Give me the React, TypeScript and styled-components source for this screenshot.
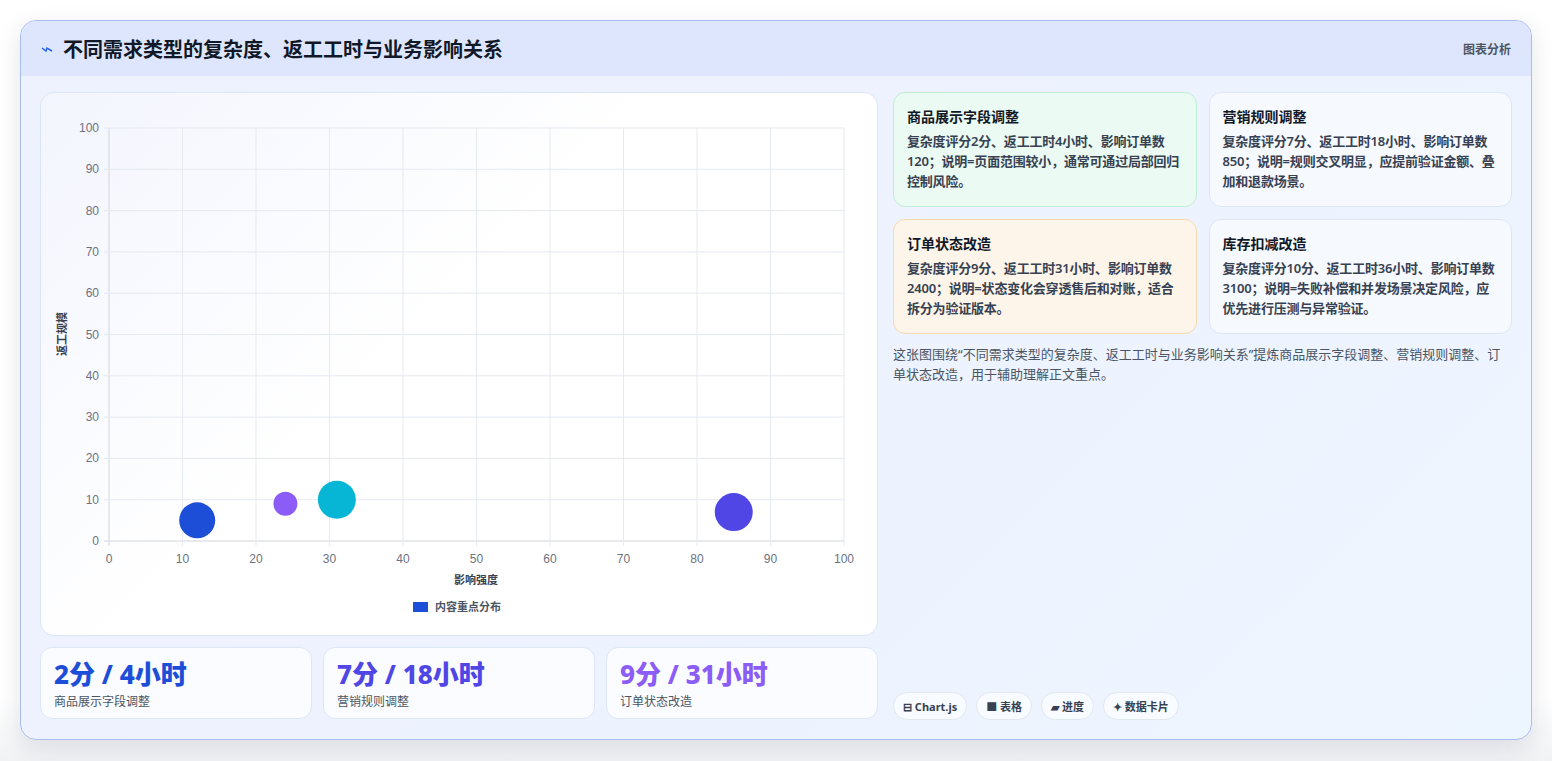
import React from "react";
import styled, { createGlobalStyle } from "styled-components";

const G = createGlobalStyle`
  body { margin:0; background:#f3f4f6; font-family: "Noto Sans", "Noto Sans CJK SC", sans-serif; }
`;
const Page = styled.div`padding:20px 20px 21px 20px; height:761px; box-sizing:border-box; background:linear-gradient(#fff 0,#fff 700px,#f1f2f4 100%);`;
const Card = styled.div`
  height:720px; box-sizing:border-box; border:1px solid #a9bdf0; border-radius:16px; overflow:hidden;
  background:linear-gradient(135deg,#eef1fe,#edf5ff); box-shadow:0 8px 24px rgba(30,40,80,.12);
  display:flex; flex-direction:column;
`;
const Header = styled.div`height:55px; background:#dde6fd; display:flex; align-items:center; justify-content:space-between; padding:0 20px 0 20px;`;
const Title = styled.h1`margin:0; font-size:20px; font-weight:700; color:#111827; display:flex; align-items:center; gap:10px;`;
const Tag = styled.span`font-size:12px; color:#4b5563; font-weight:600;`;
const Body = styled.div`flex:1; display:grid; grid-template-columns:838px 1fr; gap:15px; padding:16px 19px 19px 19px;`;
const Left = styled.div`display:flex; flex-direction:column; gap:11px;`;
const ChartBox = styled.div`height:544px; box-sizing:border-box; background:linear-gradient(135deg,#f3f5fe,#fff 45%); border:1px solid #dde5f3; border-radius:14px;`;
const Stats = styled.div`display:grid; grid-template-columns:repeat(3,1fr); gap:11px;`;
const Stat = styled.div`height:72px; box-sizing:border-box; background:#fafcff; border:1px solid #dde6f5; border-radius:12px; padding:10px 13px;`;
const Big = styled.div<{c:string}>`font-size:26px; font-weight:800; color:${p=>p.c}; line-height:32px;`;
const Small = styled.div`font-size:12px; color:#4b5563; margin-top:2px;`;
const Right = styled.div`display:flex; flex-direction:column;`;
const Grid = styled.div`display:grid; grid-template-columns:1fr 1fr; gap:12px;`;
const Info = styled.div<{bg:string; bd:string}>`height:115px; box-sizing:border-box; background:${p=>p.bg}; border:1px solid ${p=>p.bd}; border-radius:12px; padding:13px 13px;`;
const IT = styled.div`font-size:14px; font-weight:700; color:#111827; margin-bottom:5px;`;
const ID = styled.div`font-size:13px; line-height:20px; color:#374151; font-weight:600; letter-spacing:-0.2px;`;
const Note = styled.p`margin:10px 0 0; font-size:13px; line-height:20px; color:#4b5563;`;
const Chips = styled.div`margin-top:auto; display:flex; gap:9px;`;
const Chip = styled.span`height:28px; box-sizing:border-box; padding:0 9px; border:1px solid #e2e8f0; background:#f8fbff; border-radius:14px; font-size:11px; font-weight:700; color:#374151; display:flex; align-items:center; gap:3px;`;

const X0=68, X1=803, Y0=448, Y1=35;
const sx=(v:number)=>X0+(X1-X0)*v/100, sy=(v:number)=>Y0-(Y0-Y1)*v/100;
const ticks=[0,10,20,30,40,50,60,70,80,90,100];
const Chart=()=>(
  <svg width="838" height="544" style={{display:"block"}}>
    {ticks.map(t=>(<g key={t}>
      <line x1={sx(t)} x2={sx(t)} y1={Y1} y2={Y0+5} stroke={t===0?"#d1d5db":"#e5e9f0"}/>
      <line x1={X0-5} x2={X1} y1={sy(t)} y2={sy(t)} stroke={t===0?"#d1d5db":"#e5e9f0"}/>
      <text x={sx(t)} y={Y0+22} fontSize="12" fill="#6b7280" textAnchor="middle" fontFamily="Liberation Sans">{t}</text>
      <text x={X0-10} y={sy(t)+4} fontSize="12" fill="#6b7280" textAnchor="end" fontFamily="Liberation Sans">{t}</text>
    </g>))}
    <text x={435} y={491} fontSize="11" fontWeight="700" fill="#374151" textAnchor="middle">影响强度</text>
    <text transform="translate(25,241) rotate(-90)" fontSize="11" fontWeight="700" fill="#374151" textAnchor="middle">返工规模</text>
    <circle cx={sx(12)} cy={sy(5)} r={18} fill="#1d4ed8"/>
    <circle cx={sx(24)} cy={sy(9)} r={12} fill="#8b5cf6"/>
    <circle cx={sx(31)} cy={sy(10)} r={19} fill="#06b6d4"/>
    <circle cx={sx(85)} cy={sy(7)} r={19} fill="#4f46e5"/>
    <rect x={372} y={509} width={15} height={10} fill="#1d4ed8"/>
    <text x={394} y={518} fontSize="11" fontWeight="600" fill="#4b5563">内容重点分布</text>
  </svg>
);

export default function App(){
  return (<><G/><Page><Card>
    <Header><Title><svg width="12" height="12" viewBox="0 0 12 12"><path d="M1 5 L5 8 L6 5 L11 8" stroke="#2563eb" strokeWidth="1.5" fill="none"/></svg>不同需求类型的复杂度、返工工时与业务影响关系</Title><Tag>图表分析</Tag></Header>
    <Body>
      <Left>
        <ChartBox><Chart/></ChartBox>
        <Stats>
          <Stat><Big c="#1d4ed8">2分 / 4小时</Big><Small>商品展示字段调整</Small></Stat>
          <Stat><Big c="#4f46e5">7分 / 18小时</Big><Small>营销规则调整</Small></Stat>
          <Stat><Big c="#8b5cf6">9分 / 31小时</Big><Small>订单状态改造</Small></Stat>
        </Stats>
      </Left>
      <Right>
        <Grid>
          <Info bg="#ebfbf3" bd="#bdeed3"><IT>商品展示字段调整</IT><ID>复杂度评分2分、返工工时4小时、影响订单数120；说明=页面范围较小，通常可通过局部回归控制风险。</ID></Info>
          <Info bg="#f6f9fe" bd="#dde6f5"><IT>营销规则调整</IT><ID>复杂度评分7分、返工工时18小时、影响订单数850；说明=规则交叉明显，应提前验证金额、叠加和退款场景。</ID></Info>
          <Info bg="#fdf5ea" bd="#f5d8b0"><IT>订单状态改造</IT><ID>复杂度评分9分、返工工时31小时、影响订单数2400；说明=状态变化会穿透售后和对账，适合拆分为验证版本。</ID></Info>
          <Info bg="#f6f9fe" bd="#dde6f5"><IT>库存扣减改造</IT><ID>复杂度评分10分、返工工时36小时、影响订单数3100；说明=失败补偿和并发场景决定风险，应优先进行压测与异常验证。</ID></Info>
        </Grid>
        <Note>这张图围绕“不同需求类型的复杂度、返工工时与业务影响关系”提炼商品展示字段调整、营销规则调整、订单状态改造，用于辅助理解正文重点。</Note>
        <Chips><Chip>⊟ Chart.js</Chip><Chip>■ 表格</Chip><Chip>▰ 进度</Chip><Chip>✦ 数据卡片</Chip></Chips>
      </Right>
    </Body>
  </Card></Page></>);
}
